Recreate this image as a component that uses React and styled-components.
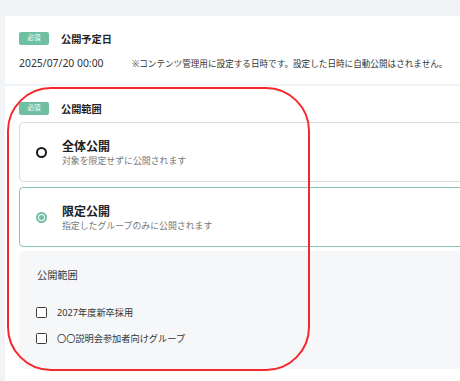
import React from "react";
import styled, { createGlobalStyle } from "styled-components";

const GlobalStyle = createGlobalStyle`
  html, body { margin: 0; padding: 0; }
  body {
    background: #f1f4f7;
    overflow: hidden;
    font-family: "Noto Sans", "Noto Sans CJK JP", sans-serif;
    color: #333;
  }
`;

const Page = styled.div`
  position: relative;
  width: 540px;
  padding: 16px 0 0 5px;
  box-sizing: border-box;
`;

const Section = styled.section`
  background: #fff;
  padding: 16px 0 0 14px;
  height: ${(p) => p.$height}px;
  box-sizing: border-box;
  margin-top: ${(p) => p.$gap || 0}px;
`;

const Header = styled.div`
  display: flex;
  align-items: center;
  gap: 12px;
  height: 13px;
`;

const Badge = styled.span`
  display: inline-flex;
  align-items: center;
  justify-content: center;
  width: 30px;
  height: 13px;
  border-radius: 2px;
  background: #6fbfa3;
  color: #fff;
  font-size: 6.5px;
  line-height: 1;
`;

const Title = styled.h2`
  margin: 0;
  font-size: 10.2px;
  font-weight: 700;
  color: #222;
  line-height: 14px;
`;

const DateRow = styled.div`
  display: flex;
  align-items: center;
  margin-top: 11px;
  height: 14px;
  color: #333;
`;

const DateValue = styled.span`
  width: 113px;
  flex: none;
  font-size: 10.4px;
`;

const Note = styled.span`
  font-size: 8.6px;
  white-space: nowrap;
`;

const Options = styled.div`
  display: flex;
  flex-direction: column;
  gap: 5px;
  margin-top: 7px;
`;

const OptionCard = styled.div`
  display: flex;
  align-items: center;
  height: 60px;
  box-sizing: border-box;
  border: 1px solid ${(p) => (p.$selected ? "#86c7ae" : "#dadada")};
  border-radius: 4px;
  padding-left: 16px;
  gap: 15px;
  background: #fff;
`;

const Radio = styled.span`
  width: 11px;
  height: 11px;
  box-sizing: border-box;
  border-radius: 50%;
  border: 2px solid ${(p) => (p.$checked ? "#6fbfa3" : "#1a1a1a")};
  display: flex;
  align-items: center;
  justify-content: center;
  flex: none;
  &::after {
    content: "";
    display: ${(p) => (p.$checked ? "block" : "none")};
    width: 5px;
    height: 5px;
    border-radius: 50%;
    background: #6fbfa3;
  }
`;

const OptionText = styled.div`
  display: flex;
  flex-direction: column;
  margin-top: 3px;
`;

const OptionTitle = styled.span`
  font-size: 12px;
  font-weight: 700;
  color: #222;
  line-height: 14px;
`;

const OptionSub = styled.span`
  font-size: 8.9px;
  color: #777;
  line-height: 14px;
`;

const GroupPanel = styled.div`
  margin-top: 4px;
  height: 118px;
  box-sizing: border-box;
  background: #f6f7f9;
  border-radius: 6px;
  padding: 17px 0 0 17px;
`;

const PanelLabel = styled.div`
  font-size: 10.2px;
  color: #3c3c3c;
  line-height: 14px;
  padding-left: 1px;
`;

const CheckList = styled.div`
  display: flex;
  flex-direction: column;
  gap: 12px;
  margin-top: 23px;
`;

const CheckRow = styled.label`
  display: flex;
  align-items: center;
  gap: 10px;
  height: 14px;
  font-size: 9.2px;
  color: #333;
`;

const CheckBox = styled.span`
  width: 11px;
  height: 11px;
  box-sizing: border-box;
  border: 1.6px solid #3a3a3a;
  border-radius: 1.5px;
  background: #fff;
  flex: none;
`;

const Annotation = styled.div`
  position: absolute;
  left: 7px;
  top: 87px;
  width: 303px;
  height: 284px;
  box-sizing: border-box;
  border: 2px solid #f5282c;
  border-radius: 44px;
  pointer-events: none;
`;

export default function App() {
  return (
    <>
      <GlobalStyle />
      <Page>
        <Section $height={68}>
          <Header>
            <Badge>必須</Badge>
            <Title>公開予定日</Title>
          </Header>
          <DateRow>
            <DateValue>2025/07/20 00:00</DateValue>
            <Note>※コンテンツ管理用に設定する日時です。設定した日時に自動公開はされません。</Note>
          </DateRow>
        </Section>
        <Section $height={300} $gap={2}>
          <Header>
            <Badge>必須</Badge>
            <Title>公開範囲</Title>
          </Header>
          <Options>
            <OptionCard>
              <Radio />
              <OptionText>
                <OptionTitle>全体公開</OptionTitle>
                <OptionSub>対象を限定せずに公開されます</OptionSub>
              </OptionText>
            </OptionCard>
            <OptionCard $selected>
              <Radio $checked />
              <OptionText>
                <OptionTitle>限定公開</OptionTitle>
                <OptionSub>指定したグループのみに公開されます</OptionSub>
              </OptionText>
            </OptionCard>
          </Options>
          <GroupPanel>
            <PanelLabel>公開範囲</PanelLabel>
            <CheckList>
              <CheckRow>
                <CheckBox />
                2027年度新卒採用
              </CheckRow>
              <CheckRow>
                <CheckBox />
                〇〇説明会参加者向けグループ
              </CheckRow>
            </CheckList>
          </GroupPanel>
        </Section>
        <Annotation />
      </Page>
    </>
  );
}
